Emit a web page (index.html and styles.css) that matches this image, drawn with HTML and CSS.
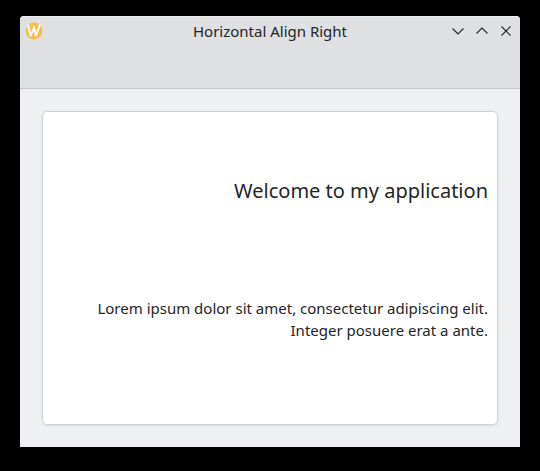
FILE: index.html
```
<!DOCTYPE html>
<html lang="en">
<head>
<meta charset="utf-8">
<title>Horizontal Align Right</title>
<link rel="stylesheet" href="styles.css">
</head>
<body>
<main class="window">
  <header class="header">
    <div class="titlebar">
      <svg class="logo" viewBox="0 0 18 18"><circle cx="9" cy="9" r="8.4" fill="#fabb4b"/><path d="M3.200 3.400 5.500 13.600 9 6 11 13.600 14.600 3.400" fill="none" stroke="#fff" stroke-width="2" stroke-linejoin="round" stroke-linecap="round"/><path d="M9 3.500V7" stroke="#fff" stroke-width="1.300"/></svg>
      <h1 class="title">Horizontal Align Right</h1>
      <div class="controls">
        <svg viewBox="0 0 16 16"><path d="M2.500 5.500 8 11l5.500-5.500"/></svg>
        <svg viewBox="0 0 16 16"><path d="M2.500 10.500 8 5l5.500 5.500"/></svg>
        <svg viewBox="0 0 16 16"><path d="m3.500 3.500 9 9M12.500 3.500l-9 9"/></svg>
      </div>
    </div>
  </header>
  <section class="content">
    <article class="card">
      <h2 class="heading">Welcome to my application</h2>
      <p class="text">Lorem ipsum dolor sit amet, consectetur adipiscing elit.<br>Integer posuere erat a ante.</p>
    </article>
  </section>
</main>
</body>
</html>
```
FILE: styles.css
```
* { box-sizing: border-box; }
body { margin: 0; height: 471px; padding: 16px 20px 24px; background: #000; color: #232629; font-family: "Noto Sans", sans-serif; font-size: 15px; overflow: hidden; }
.window { height: 431px; display: flex; flex-direction: column; background: #eff0f1; border-radius: 4px 4px 0 0; overflow: hidden; }
.header { height: 73px; background: #dee0e2; border-bottom: 1px solid #c4c7c9; box-shadow: inset 0 1px #eceded; border-radius: 4px 4px 0 0; }
.titlebar { height: 30px; display: grid; grid-template-columns: 72px 1fr 72px; align-items: center; }
.logo { width: 18px; height: 18px; margin-left: 5px; }
.title { margin: 0; font-size: 15px; font-weight: 400; line-height: 30px; text-align: center; }
.controls { display: flex; gap: 8px; padding-right: 6px; justify-content: flex-end; }
.controls svg { width: 16px; height: 16px; fill: none; stroke: #232629; stroke-width: 1.1; }
.content { flex: 1; padding: 22px; }
.card { height: 314px; padding: 64px 9px 0; background: #fff; border: 1px solid #cfd1d3; border-radius: 5px; box-shadow: 0 1px 3px #00000012; text-align: right; }
.heading { margin: 0; font-size: 20px; font-weight: 400; line-height: 30px; }
.text { margin: 91px 0 0; line-height: 22px; }
```
